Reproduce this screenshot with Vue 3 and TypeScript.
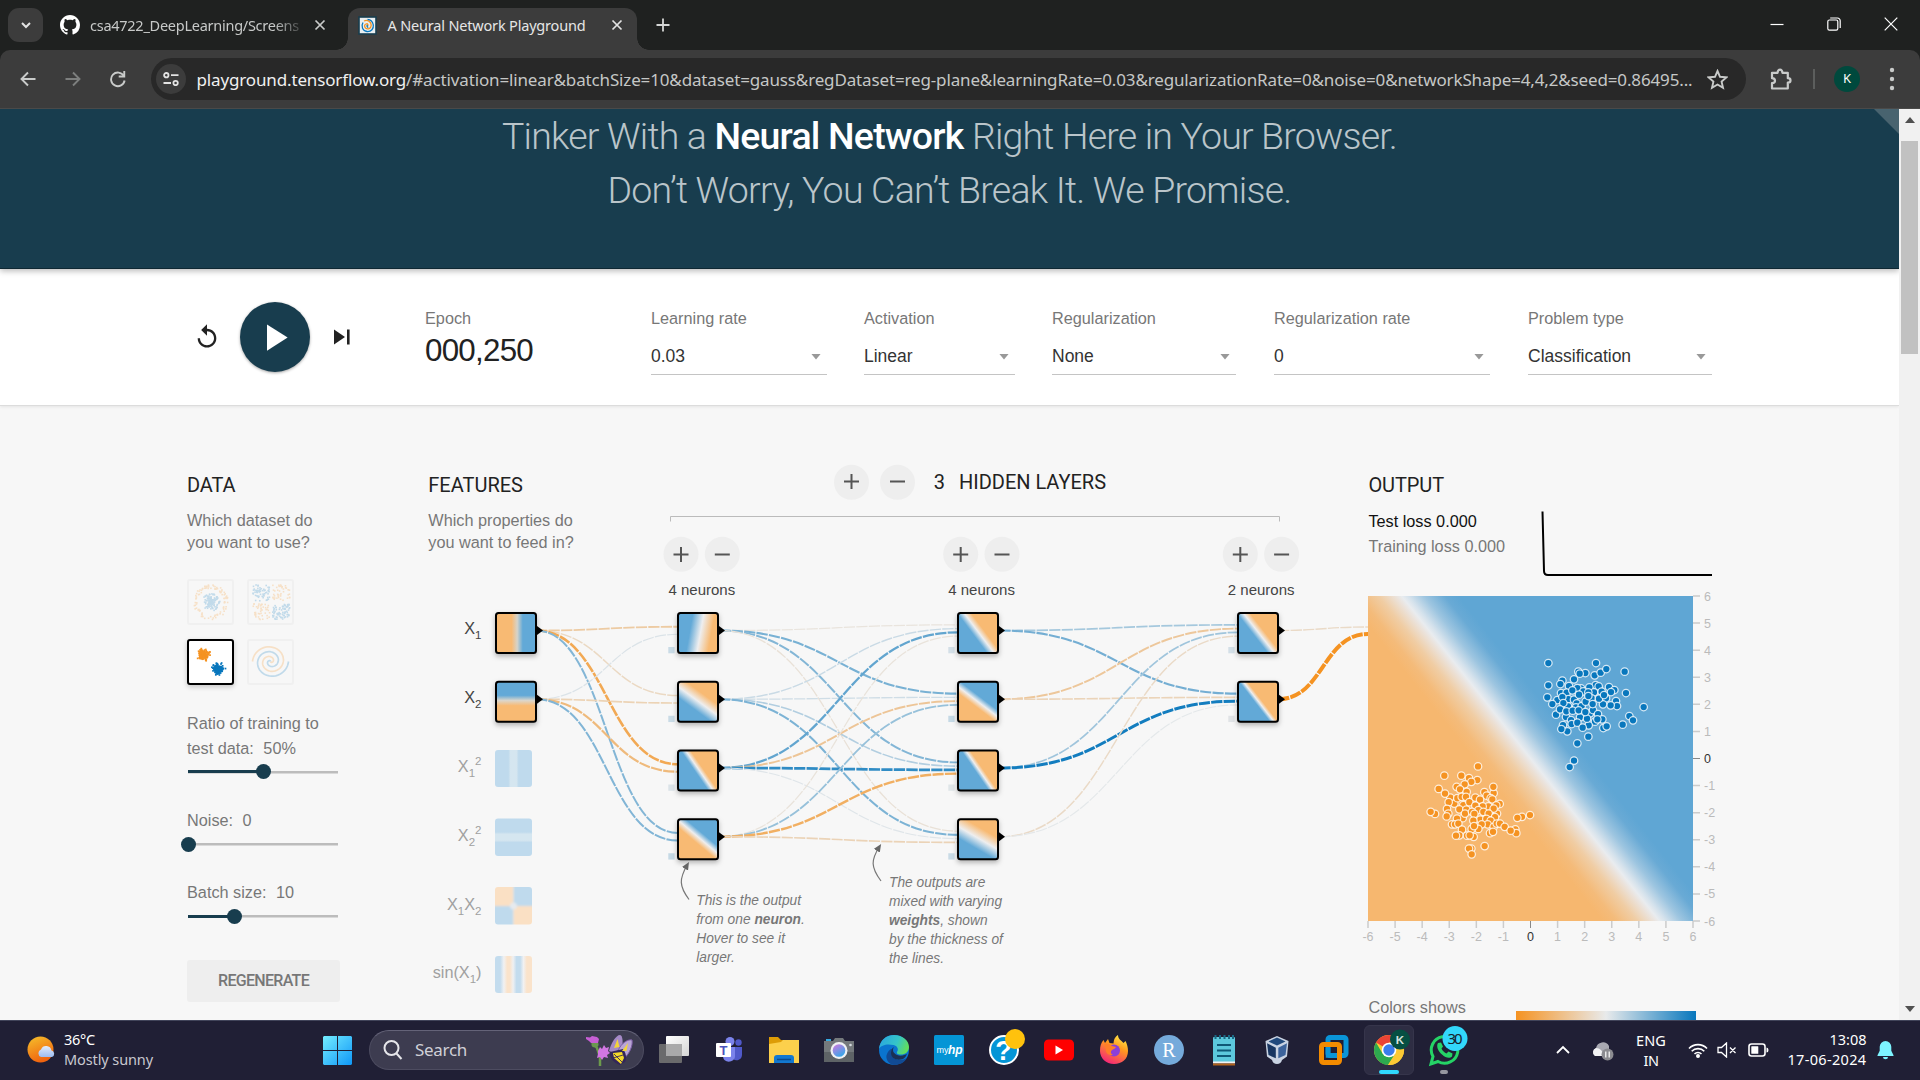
<script setup lang="ts">
import type { Directive } from 'vue'

// Tracks a single line of text so that it fills the given width.
const vFit: Directive<HTMLElement, number> = {
  mounted(el, binding) {
    const natural = el.getBoundingClientRect().width
    const count = (el.textContent ?? '').length
    if (count > 0) el.style.letterSpacing = `${(binding.value - natural) / count}px`
  },
}

const ORANGE = '#f8ba73'
const BLUE = '#62a9d7'
const PALE = '#eeeeef'

interface Control { label: string; value: string; width: number; gap: number }
const controls: Control[] = [
  { label: 'Learning rate', value: '0.03', width: 176, gap: 37 },
  { label: 'Activation', value: 'Linear', width: 151, gap: 37 },
  { label: 'Regularization', value: 'None', width: 184, gap: 38 },
  { label: 'Regularization rate', value: '0', width: 216, gap: 38 },
  { label: 'Problem type', value: 'Classification', width: 184, gap: 0 },
]

// ---- dataset thumbnails ----
interface Dot { x: number; y: number; c: string }
let seed = 7
function rnd(): number {
  seed = (seed * 16807) % 2147483647
  return seed / 2147483647
}
function gauss(): number {
  return (rnd() + rnd() + rnd() + rnd() - 2) * 0.9
}
const circleDots: Dot[] = []
for (let i = 0; i < 120; i++) {
  const a = rnd() * Math.PI * 2
  const r = rnd() * 9
  circleDots.push({ x: 23 + Math.cos(a) * r, y: 22.5 + Math.sin(a) * r, c: '#0877bd' })
}
for (let i = 0; i < 95; i++) {
  const a = rnd() * Math.PI * 2
  const r = 13.5 + rnd() * 4
  circleDots.push({ x: 23 + Math.cos(a) * r, y: 22.5 + Math.sin(a) * r, c: '#f59322' })
}
const xorDots: Dot[] = []
for (let i = 0; i < 220; i++) {
  const sx = rnd() < 0.5 ? -1 : 1
  const sy = rnd() < 0.5 ? -1 : 1
  xorDots.push({
    x: 23.5 + sx * (1.5 + rnd() * 17),
    y: 22.5 + sy * (1.5 + rnd() * 16),
    c: sx * sy > 0 ? '#0877bd' : '#f59322',
  })
}
const gaussDots: Dot[] = []
for (let i = 0; i < 150; i++) {
  gaussDots.push({ x: 15.5 + gauss() * 4.7, y: 15 + gauss() * 4.5, c: '#f59322' })
  gaussDots.push({ x: 30.3 + gauss() * 4.7, y: 29 + gauss() * 4.5, c: '#0877bd' })
}
function spiral(phase: number): string {
  const pts: string[] = []
  for (let i = 0; i <= 80; i++) {
    const t = i / 80
    const a = 1.75 * t * 2 * Math.PI + phase
    pts.push(`${(23.5 + Math.sin(a) * t * 18).toFixed(1)},${(22.5 + Math.cos(a) * t * 17).toFixed(1)}`)
  }
  return pts.join(' ')
}
const spirals = [
  { pts: spiral(0), c: '#f59322' },
  { pts: spiral(Math.PI), c: '#0877bd' },
]

const sliders = [
  { label: 'Noise:', value: '0', pos: 0, top: 28.5 },
  { label: 'Batch size:', value: '10', pos: 46, top: 28 },
]

// ---- network ----
const rowY = (i: number) => 630.5 + 68.75 * i
interface Heat { a: [number, number]; b: [number, number]; half: number; flip: boolean; mid?: string }
interface NetNode extends Heat { id: string; x: number; row: number; bias?: string }

const nodes: NetNode[] = [
  { id: 'i0', x: 495, row: 0, a: [0.53, 0], b: [0.53, 1], half: 0.14, flip: true, mid: '#d6d3c9' },
  { id: 'i1', x: 495, row: 1, a: [0, 0.47], b: [1, 0.47], half: 0.13, flip: true, mid: '#dcd6cb' },
  { id: 'a0', x: 677, row: 0, a: [0.65, 0], b: [0.47, 1], half: 0.27, flip: false, bias: '#c9dbe6' },
  { id: 'a1', x: 677, row: 1, a: [0, 0.12], b: [1, 0.85], half: 0.22, flip: false, bias: '#c9dbe6' },
  { id: 'a2', x: 677, row: 2, a: [0.19, 0], b: [0.88, 1], half: 0.1, flip: false, bias: '#dbe3e8' },
  { id: 'a3', x: 677, row: 3, a: [0, 0.02], b: [1, 0.86], half: 0.14, flip: true, bias: '#c5d9e5' },
  { id: 'b0', x: 957, row: 0, a: [0.15, 0], b: [0.9, 1], half: 0.14, flip: false, bias: '#d3dfe7' },
  { id: 'b1', x: 957, row: 1, a: [0, 0.12], b: [1, 0.88], half: 0.13, flip: true, bias: '#c5d9e5' },
  { id: 'b2', x: 957, row: 2, a: [0.19, 0], b: [0.88, 1], half: 0.09, flip: false, bias: '#dfe5e8' },
  { id: 'b3', x: 957, row: 3, a: [0, 0.18], b: [1, 0.76], half: 0.25, flip: false, bias: '#c9dbe6' },
  { id: 'c0', x: 1237, row: 0, a: [0.13, 0], b: [0.91, 1], half: 0.13, flip: false, bias: '#d3dfe7' },
  { id: 'c1', x: 1237, row: 1, a: [0.13, 0], b: [0.9, 1], half: 0.08, flip: false, bias: '#e0e3e6' },
]
function axis(n: Heat) {
  const dx = n.b[0] - n.a[0]
  const dy = n.b[1] - n.a[1]
  const len = Math.hypot(dx, dy)
  const cx = (n.a[0] + n.b[0]) / 2
  const cy = (n.a[1] + n.b[1]) / 2
  const nx = (dy / len) * n.half
  const ny = (-dx / len) * n.half
  return { x1: cx - nx, y1: cy - ny, x2: cx + nx, y2: cy + ny }
}

function mix(w: number): string {
  const t = Math.min(1, Math.abs(w))
  const to = w < 0 ? [245, 147, 34] : [8, 119, 189]
  const from = [232, 234, 235]
  return `rgb(${from.map((v, i) => Math.round(v + (to[i] - v) * t)).join(',')})`
}
interface Link { d: string; c: string; w: number }
const links: Link[] = []
function connect(x0: number, x1: number, weights: number[][]) {
  const n = weights.length
  weights.forEach((row, i) =>
    row.forEach((w, j) => {
      const ty = rowY(j) + ((i - (n - 1) / 2) / n) * 15
      const mx = (x0 + x1) / 2
      links.push({
        d: `M${x0},${rowY(i)}C${mx},${rowY(i)} ${mx},${ty} ${x1},${ty}`,
        c: mix(w),
        w: (1 + (9 * Math.abs(w)) / 5) * 1.1,
      })
    }),
  )
}
connect(536, 678, [
  [-0.36, -0.2, -0.75, 0.45],
  [0.06, -0.27, -0.55, 0.46],
])
connect(719, 958, [
  [-0.07, 0.5, 0.45, -0.1],
  [0.14, 0.11, 0.24, 0.48],
  [0.6, -0.42, 0.82, 0.04],
  [-0.08, 0.36, -0.68, -0.26],
])
connect(999, 1238, [
  [0.3, 0.52],
  [-0.4, -0.25],
  [0.32, 0.95],
  [-0.18, 0.02],
])
links.push({ d: `M1278,630.5C1323,630.5 1323,627 1368,627`, c: mix(-0.18), w: 1.4 })
links.push({ d: `M1278,699.3C1323,699.3 1323,634 1368,634`, c: mix(-1), w: 4 })

const layers = [
  { x: 681, label: '4 neurons' },
  { x: 960.7, label: '4 neurons' },
  { x: 1240.3, label: '2 neurons' },
]

// ---- output scatter ----
const bluePts = [
  [145,99],[288,99],[374,125],[284,136],[302,128],[319,117],[235,125],[256,129],[239,131],[187,152],[222,148],[181,162],
  [145,166],[207,168],[243,175],[232,174],[287,165],[268,172],[296,169],[327,171],[343,180],[250,184],[282,187],
  [305,185],[333,186],[378,189],[431,231],[388,258],[399,271],[368,284],[310,294],[320,289],[318,205],[348,213],[351,228],
  [332,226],[309,223],[142,202],[172,210],[157,222],[168,254],[183,189],[200,188],[217,181],[205,207],[222,209],[230,220],
  [228,232],[187,201],[204,229],[190,219],[180,238],[198,261],[199,244],[213,270],[189,285],[202,304],[184,297],[215,282],
  [240,262],[232,278],[270,250],[285,275],[266,286],[248,293],[261,266],[218,242],[245,228],[236,241],[275,205],[257,215],
  [279,240],[278,222],[256,246],[294,252],[307,268],[292,268],[297,206],[312,195],[237,194],[265,187],[265,198],[265,320],
  [232,340],[222,392],[209,411],
].map(([x, y]) => [1500 + x / 3, 630 + y / 3])
const orangePts = [
  [414,858],[313,884],[364,884],[387,891],[412,896],[394,901],[296,921],[350,915],[374,908],[360,922],[331,945],[315,934],
  [380,929],[461,933],[460,915],[433,930],[343,962],[352,947],[365,943],[378,943],[326,958],[370,966],[388,958],[406,945],
  [440,940],[452,947],[420,951],[457,950],[479,963],[469,967],[445,970],[428,970],[406,968],[471,990],[461,976],[358,978],
  [379,979],[321,977],[325,990],[320,998],[285,991],[272,985],[368,1003],[351,1004],[336,1020],[345,1020],[355,1018],
  [375,990],[415,980],[430,985],[396,985],[403,991],[421,1007],[446,990],[465,1000],[439,1005],[400,1010],[452,1010],
  [443,1020],[425,1020],[461,1027],[470,1018],[480,1018],[494,1027],[526,1034],[529,1045],[512,1038],[546,999],[532,1002],
  [570,994],[450,1045],[459,1041],[415,1033],[395,1033],[402,1025],[366,1035],[358,1051],[348,1052],[381,1052],[401,1055],
  [389,1051],[434,1081],[394,1088],[387,1088],[395,1104],
].map(([x, y]) => [1340 + x / 3, 460 + y / 2.8])
const ticks = Array.from({ length: 13 }, (_, i) => i - 6)
const unit = 325 / 12
</script>

<template>
  <div class="screen">
    <!-- tab strip -->
    <div class="tabs">
      <div class="tab-menu">
        <svg width="12" height="12" viewBox="0 0 12 12"><path d="M2 4l4 4 4-4" fill="none" stroke="#e3e3e3" stroke-width="2" /></svg>
      </div>
      <div class="tab idle">
        <svg width="20" height="20" viewBox="0 0 16 16"><path fill="#fff" d="M8 0C3.58 0 0 3.58 0 8c0 3.54 2.29 6.53 5.47 7.59.4.07.55-.17.55-.38 0-.19-.01-.82-.01-1.49-2.01.37-2.53-.49-2.69-.94-.09-.23-.48-.94-.82-1.13-.28-.15-.68-.52-.01-.53.63-.01 1.08.58 1.23.82.72 1.21 1.87.87 2.33.66.07-.52.28-.87.51-1.07-1.78-.2-3.64-.89-3.64-3.95 0-.87.31-1.59.82-2.15-.08-.2-.36-1.02.08-2.12 0 0 .67-.21 2.2.82.64-.18 1.32-.27 2-.27s1.36.09 2 .27c1.53-1.04 2.2-.82 2.2-.82.44 1.1.16 1.92.08 2.12.51.56.82 1.27.82 2.15 0 3.07-1.87 3.75-3.65 3.95.29.25.54.73.54 1.48 0 1.07-.01 1.93-.01 2.2 0 .21.15.46.55.38A8.01 8.01 0 0 0 16 8c0-4.42-3.58-8-8-8z" /></svg>
        <span class="tab-text fade"><span v-fit="209" class="fit">csa4722_DeepLearning/Screens</span></span>
        <svg class="x" width="12" height="12" viewBox="0 0 12 12"><path d="M1.5 1.5l9 9m0-9l-9 9" stroke="#c9cbca" stroke-width="1.7" /></svg>
      </div>
      <div class="tab live">
        <svg width="19" height="19" viewBox="0 0 19 19">
          <rect x="1" y="1" width="17" height="17" fill="#e9eef0" stroke="#183d4e" stroke-width="1.6" />
          <path d="M9.5 10c1-1 .3-2.4-1-2.2C6.4 8 6 10.6 7.5 12c2.2 2 5.6.4 5.7-2.7C13.3 5.5 9.4 3.5 6 5" fill="none" stroke="#f59322" stroke-width="1.3" />
          <path d="M9.5 9c-1 1-.3 2.4.8 2.2M5 6.5C2.8 10 4.5 15 9 15.5c4.3.4 6.8-3 6.3-6.5C14.8 5.8 12.5 3.5 9.5 3.3" fill="none" stroke="#0877bd" stroke-width="1.3" />
        </svg>
        <span v-fit="198" class="tab-text fit">A Neural Network Playground</span>
        <svg class="x" width="12" height="12" viewBox="0 0 12 12"><path d="M1.5 1.5l9 9m0-9l-9 9" stroke="#e3e3e3" stroke-width="1.7" /></svg>
      </div>
      <svg class="new-tab" width="14" height="14" viewBox="0 0 14 14"><path d="M7 .5v13M.5 7h13" stroke="#d5d7d6" stroke-width="1.8" /></svg>
      <div class="win">
        <svg width="14" height="14" viewBox="0 0 14 14"><path d="M.5 7.5h13" stroke="#fff" stroke-width="1.2" /></svg>
        <svg width="14" height="14" viewBox="0 0 14 14" fill="none" stroke="#fff" stroke-width="1.2"><rect x=".8" y="3" width="10" height="10.2" rx="1.6" /><path d="M3.2 1h7.200a2.800 2.800 0 0 1 2.800 2.800V11" /></svg>
        <svg width="14" height="14" viewBox="0 0 14 14"><path d="M.7.7l12.600 12.600m0-12.600L.7 13.300" stroke="#fff" stroke-width="1.2" /></svg>
      </div>
    </div>

    <!-- toolbar -->
    <div class="toolbar-back">
      <div class="toolbar">
        <svg class="nav back" width="16" height="16" viewBox="0 0 16 16"><path d="M15.5 8H2M8 1.5L1.5 8 8 14.5" fill="none" stroke="#c9cbca" stroke-width="1.9" /></svg>
        <svg class="nav fwd" width="16" height="16" viewBox="0 0 16 16"><path d="M.5 8H14M8 1.5L14.5 8 8 14.5" fill="none" stroke="#7d7f7e" stroke-width="1.9" /></svg>
        <svg class="nav rel" width="18" height="18" viewBox="0 0 18 18"><path d="M14.8 6A6.8 6.8 0 1 0 15.6 10.5" fill="none" stroke="#c9cbca" stroke-width="1.9" /><path d="M16.2 1v6.5H9.700V5.600h4.600V1z" fill="#c9cbca" /></svg>
        <div class="omnibox">
          <div class="site-info">
            <svg width="16" height="14" viewBox="0 0 16 14" fill="none" stroke="#e3e3e3" stroke-width="1.8"><circle cx="3.3" cy="3.2" r="2.2" /><path d="M8 3.2h7.5M.5 11h7.5" /><circle cx="12.6" cy="11" r="2.2" /></svg>
          </div>
          <span v-fit="1496" class="fit url"><b>playground.tensorflow.org</b>/#activation=linear&amp;batchSize=10&amp;dataset=gauss&amp;regDataset=reg-plane&amp;learningRate=0.03&amp;regularizationRate=0&amp;noise=0&amp;networkShape=4,4,2&amp;seed=0.86495...</span>
          <svg class="star" width="21" height="21" viewBox="0 0 21 21"><path d="M10.5 2l2.500 5.800 6.300.6-4.700 4.200 1.400 6.200-5.500-3.300L5 18.800l1.400-6.200L1.700 8.400 8 7.800z" fill="none" stroke="#c9cbca" stroke-width="1.9" /></svg>
        </div>
        <svg class="puzzle" width="22" height="22" viewBox="0 0 22 22"><path d="M2 4.800h5.600c0-4.200 4.800-4.200 4.800 0h5.400v5.400c3.600 0 3.600 4.400 0 4.400V20.500H2v-5.300c4-.6 4-4.600 0-5z" fill="none" stroke="#c9cbca" stroke-width="2.2" stroke-linejoin="round" /></svg>
        <i class="divider"></i>
        <div class="avatar">K</div>
        <svg class="dots" width="6" height="24" viewBox="0 0 6 24" fill="#c9cbca"><circle cx="3" cy="3" r="2.2" /><circle cx="3" cy="12" r="2.2" /><circle cx="3" cy="21" r="2.2" /></svg>
      </div>
    </div>

    <!-- page -->
    <div class="viewport">
      <div class="page">
        <header class="banner">
          <h1><span v-fit="895" class="fit">Tinker With a <b>Neural Network</b> Right Here in Your Browser.</span></h1>
          <h1><span v-fit="684" class="fit">Don’t Worry, You Can’t Break It. We Promise.</span></h1>
          <i class="corner"></i>
        </header>

        <section class="controls">
          <svg class="reset" width="28" height="28" viewBox="0 0 24 24"><path fill="#222" d="M12 5V1L7 6l5 5V7c3.310 0 6 2.690 6 6s-2.690 6-6 6-6-2.690-6-6H4c0 4.420 3.580 8 8 8s8-3.580 8-8-3.580-8-8-8z" /></svg>
          <div class="play"><svg width="45" height="45" viewBox="0 0 24 24"><path fill="#fff" d="M8 5v14l11-7z" /></svg></div>
          <svg class="step" width="16" height="16" viewBox="0 0 16 16" fill="#222"><path d="M0 .5v15L11 8z" /><rect x="13" y=".5" width="2.6" height="15" /></svg>
          <div class="epoch"><span class="label">Epoch</span><span class="count"><span v-fit="108" class="fit">000,250</span></span></div>
          <div v-for="c in controls" :key="c.label" class="control" :style="{ width: c.width + 'px', marginRight: c.gap + 'px' }">
            <span class="label">{{ c.label }}</span>
            <div class="select"><span>{{ c.value }}</span><i></i></div>
          </div>
        </section>

        <main class="main">
          <section class="data">
            <h4>DATA</h4>
            <p>Which dataset do<br />you want to use?</p>
            <div class="sets">
              <div class="set off">
                <svg width="43" height="42" viewBox="2 2 43 42"><rect v-for="(d, i) in circleDots" :key="i" :x="d.x" :y="d.y" width="1.6" height="1.6" :fill="d.c" /></svg>
              </div>
              <div class="set off">
                <svg width="43" height="42" viewBox="2 2 43 42"><rect v-for="(d, i) in xorDots" :key="i" :x="d.x" :y="d.y" width="1.6" height="1.6" :fill="d.c" /></svg>
              </div>
              <div class="set on">
                <svg width="43" height="42" viewBox="2 2 43 42"><rect v-for="(d, i) in gaussDots" :key="i" :x="d.x" :y="d.y" width="1.7" height="1.7" :fill="d.c" /></svg>
              </div>
              <div class="set off">
                <svg width="43" height="42" viewBox="2 2 43 42"><polyline v-for="s in spirals" :key="s.c" :points="s.pts" fill="none" :stroke="s.c" stroke-width="1.7" /></svg>
              </div>
            </div>
            <div class="slider-label">Ratio of training to<br />test data:<span>50%</span></div>
            <div class="slider"><i style="width: 50%"></i><b style="left: 50%"></b></div>
            <template v-for="s in sliders" :key="s.label">
              <div class="slider-label" :style="{ marginTop: s.top + 'px' }">{{ s.label }}<span>{{ s.value }}</span></div>
              <div class="slider"><i :style="{ width: s.pos + 'px' }"></i><b :style="{ left: s.pos + 'px' }"></b></div>
            </template>
            <div class="regen"><span v-fit="91" class="fit">REGENERATE</span></div>
          </section>

          <section class="network">
            <h4>FEATURES</h4>
            <p>Which properties do<br />you want to feed in?</p>
            <svg class="graph" width="939" height="614" viewBox="429 406 939 614">
              <defs>
                <linearGradient v-for="n in nodes" :id="'g-' + n.id" :key="n.id" v-bind="axis(n)">
                  <stop offset="0" :stop-color="n.flip ? ORANGE : BLUE" />
                  <stop offset="0.5" :stop-color="n.mid ?? PALE" />
                  <stop offset="1" :stop-color="n.flip ? BLUE : ORANGE" />
                </linearGradient>
                <linearGradient id="sq1">
                  <stop offset=".36" stop-color="#bfdaed" /><stop offset=".42" stop-color="#d5e6f0" /><stop offset=".58" stop-color="#d5e6f0" /><stop offset=".64" stop-color="#bfdaed" />
                </linearGradient>
                <linearGradient id="sq2" x1="0" x2="0" y1="0" y2="1">
                  <stop offset=".36" stop-color="#bfdaed" /><stop offset=".42" stop-color="#d5e6f0" /><stop offset=".58" stop-color="#d5e6f0" /><stop offset=".64" stop-color="#bfdaed" />
                </linearGradient>
                <linearGradient id="sin">
                  <stop offset=".14" stop-color="#c3dcee" /><stop offset=".24" stop-color="#f1f1f2" /><stop offset=".33" stop-color="#fae3cb" /><stop offset=".4" stop-color="#fae3cb" /><stop offset=".49" stop-color="#eff0f2" />
                  <stop offset=".58" stop-color="#c3dcee" /><stop offset=".68" stop-color="#c3dcee" /><stop offset=".77" stop-color="#f1f1f2" /><stop offset=".86" stop-color="#fae3cb" />
                </linearGradient>
                <clipPath id="cross"><rect x="495" y="887" width="37" height="37.5" rx="3" /></clipPath>
                <filter id="drop" x="-30%" y="-30%" width="160%" height="170%"><feDropShadow dx="0" dy="2.5" stdDeviation="2.5" flood-opacity=".28" /></filter>
                <filter id="soft"><feGaussianBlur stdDeviation="1" /></filter>
                <marker id="head" markerWidth="9" markerHeight="8" refX="5" refY="3.5" orient="auto" markerUnits="userSpaceOnUse"><path d="M0 0l8 3.5L0 7z" fill="#666" /></marker>
              </defs>

              <g fill="none" stroke-dasharray="11.25 1.25">
                <path v-for="(l, i) in links" :key="i" :d="l.d" :stroke="l.c" :stroke-width="l.w" />
              </g>

              <g v-for="n in nodes" :key="n.id">
                <rect v-if="n.bias" :x="n.x - 8.7" :y="rowY(n.row) + 16.5" width="6.3" height="6.3" :fill="n.bias" />
                <path :d="`M${n.x + 40},${rowY(n.row) - 6}l8,6l-8,6z`" fill="#000" />
                <rect :x="n.x + 1" :y="rowY(n.row) - 17.5" width="40" height="40" rx="2.5" :fill="`url(#g-${n.id})`" stroke="#000" stroke-width="2" filter="url(#drop)" />
              </g>

              <rect x="495" y="750" width="37" height="37" rx="3" fill="url(#sq1)" />
              <rect x="495" y="818.5" width="37" height="37.5" rx="3" fill="url(#sq2)" />
              <g clip-path="url(#cross)">
                <g filter="url(#soft)">
                  <rect x="490" y="880" width="23.5" height="26" fill="#fae0c4" /><rect x="513.5" y="880" width="24" height="26" fill="#bfdaed" />
                  <rect x="490" y="906" width="23.5" height="24" fill="#bfdaed" /><rect x="513.5" y="906" width="24" height="24" fill="#fae0c4" />
                  <circle cx="513.5" cy="906" r="3.5" fill="#e6eaee" />
                </g>
              </g>
              <rect x="495" y="956" width="37" height="37" rx="3" fill="url(#sin)" />

              <g class="feat" text-anchor="end">
                <text x="481.5" y="634">X<tspan class="s" dy="5">1</tspan></text>
                <text x="481.5" y="702.5">X<tspan class="s" dy="5">2</tspan></text>
                <g fill="#a0a0a0">
                  <text x="481.5" y="771.5">X<tspan class="s" dy="5">1</tspan><tspan class="s" dy="-11.5">2</tspan></text>
                  <text x="481.5" y="840.5">X<tspan class="s" dy="5">2</tspan><tspan class="s" dy="-11.5">2</tspan></text>
                  <text x="481.5" y="909.5">X<tspan class="s" dy="5">1</tspan><tspan dy="-5">X</tspan><tspan class="s" dy="5">2</tspan></text>
                  <text x="481.5" y="978">sin(X<tspan class="s" dy="5">1</tspan><tspan dy="-5">)</tspan></text>
                </g>
              </g>

              <g fill="none" stroke="#555" stroke-width="2">
                <circle cx="851.5" cy="482.3" r="17.5" fill="#eee" stroke="none" /><path d="M844 481.5h15M851.5 474v15" />
                <circle cx="897.5" cy="482.3" r="17.5" fill="#eee" stroke="none" /><path d="M890 481.5h15" />
                <g v-for="l in layers" :key="l.x">
                  <circle :cx="l.x" cy="554.3" r="17.5" fill="#eee" stroke="none" /><path :d="`M${l.x - 7.5} 554.5h15M${l.x} 547v15`" />
                  <circle :cx="l.x + 41.3" cy="554.3" r="17.5" fill="#eee" stroke="none" /><path :d="`M${l.x + 33.8} 554.5h15`" />
                </g>
              </g>
              <g class="roboto">
                <text x="933.8" y="489">3</text>
                <text x="959" y="489" textLength="147">HIDDEN LAYERS</text>
              </g>
              <g class="count-label"><text v-for="l in layers" :key="l.x" :x="l.x - 12.5" y="595">{{ l.label }}</text></g>
              <path d="M670.5 521.5v-5h609v5" fill="none" stroke="#bbb" />

              <g fill="none" stroke="#777" stroke-width="1.2" marker-end="url(#head)">
                <path d="M689 899.5C679 886 679 879 687.5 864.5" />
                <path d="M881 881C870.5 867 871 860 879.5 846.5" />
              </g>
              <g class="note">
                <text><tspan x="696.3" y="904.5">This is the output</tspan><tspan x="696.3" y="923.5">from one <tspan class="strong">neuron</tspan>.</tspan><tspan x="696.3" y="942.5">Hover to see it</tspan><tspan x="696.3" y="961.7">larger.</tspan></text>
                <text><tspan x="889" y="887">The outputs are</tspan><tspan x="889" y="906.2">mixed with varying</tspan><tspan x="889" y="925"><tspan class="strong">weights</tspan>, shown</tspan><tspan x="889" y="944.2">by the thickness of</tspan><tspan x="889" y="963">the lines.</tspan></text>
              </g>
            </svg>
          </section>

          <section class="output">
            <h4>OUTPUT</h4>
            <div class="metrics">
              <div class="loss"><span class="dark">Test loss 0.000</span><span>Training loss 0.000</span></div>
              <svg width="172" height="68" viewBox="1541 510 172 68"><path d="M1542.5 511.5L1544 571Q1544 575 1548 575H1712" fill="none" stroke="#000" stroke-width="2" /></svg>
            </div>
            <svg class="heat" width="362" height="364" viewBox="1358 584 362 364">
              <defs>
                <linearGradient id="field" gradientUnits="userSpaceOnUse" x1="1495.7" y1="786.1" x2="1565.3" y2="730.9">
                  <stop offset="0" stop-color="#f6b76f" /><stop offset=".12" stop-color="#f4bb7a" /><stop offset=".3" stop-color="#f0cda4" /><stop offset=".45" stop-color="#ebe3dc" />
                  <stop offset=".5" stop-color="#e9ecef" /><stop offset=".56" stop-color="#d5e2ec" /><stop offset=".7" stop-color="#9dc5e0" /><stop offset=".88" stop-color="#69aad5" /><stop offset="1" stop-color="#5fa6d4" />
                </linearGradient>
              </defs>
              <rect x="1368" y="596" width="325" height="325" fill="url(#field)" />
              <g stroke="#fff" stroke-opacity=".8" stroke-width="1.25">
                <circle v-for="(p, i) in orangePts" :key="'o' + i" :cx="p[0]" :cy="p[1]" r="3.75" fill="#f59322" />
                <circle v-for="(p, i) in bluePts" :key="'b' + i" :cx="p[0]" :cy="p[1]" r="3.75" fill="#0877bd" />
              </g>
              <g v-for="t in ticks" :key="t" :class="['tick', { zero: t === 0 }]">
                <path :d="`M${1530.5 + t * unit} 921v7M1693 ${758.5 - t * unit}h7`" />
                <text :x="1530.5 + t * unit" y="941" text-anchor="middle">{{ t }}</text>
                <text x="1704" :y="763 - t * unit">{{ t }}</text>
              </g>
            </svg>
            <div class="legend"><span>Colors shows</span><i></i></div>
          </section>
        </main>
      </div>
      <div class="scroll">
        <svg width="10" height="6" viewBox="0 0 10 6"><path d="M0 6l5-6 5 6z" fill="#505050" /></svg>
        <i></i>
        <svg class="down" width="10" height="6" viewBox="0 0 10 6"><path d="M0 0l5 6 5-6z" fill="#505050" /></svg>
      </div>
    </div>

    <!-- taskbar -->
    <footer class="taskbar">
      <svg class="weather" width="30" height="28" viewBox="0 0 30 28">
        <defs>
          <linearGradient id="sun" x1="0" y1="0" x2=".4" y2="1"><stop offset="0" stop-color="#f5c12c" /><stop offset="1" stop-color="#f0640f" /></linearGradient>
          <linearGradient id="cl" x1="0" y1="0" x2="0" y2="1"><stop offset="0" stop-color="#e3ecfb" /><stop offset="1" stop-color="#9dbcf0" /></linearGradient>
        </defs>
        <circle cx="13.5" cy="13.5" r="13" fill="url(#sun)" /><path d="M14 21a4 4 0 0 1 0-7.5 5.5 5.5 0 0 1 10.5 1A3.400 3.400 0 0 1 25 21z" fill="url(#cl)" />
      </svg>
      <div class="forecast"><span v-fit="31" class="fit white">36°C</span><span v-fit="89" class="fit">Mostly sunny</span></div>
      <svg class="start" width="29" height="29" viewBox="0 0 29 29">
        <defs><linearGradient id="win" gradientUnits="userSpaceOnUse" x1="0" y1="0" x2="29" y2="29"><stop offset="0" stop-color="#74edff" /><stop offset="1" stop-color="#0f97f7" /></linearGradient></defs>
        <path fill="url(#win)" d="M1 0h13v14H0V1zM15 0h13l1 1v13H15zM0 15h14v14H1l-1-1zM15 15h14v13l-1 1H15z" />
      </svg>
      <div class="search">
        <svg width="20" height="20" viewBox="0 0 20 20" fill="none" stroke="#e6e6ea" stroke-width="2"><circle cx="8.5" cy="8" r="7" /><path d="M13.5 13.5L18.5 19" /></svg>
        <span v-fit="52" class="fit">Search</span>
        <svg class="fly" width="48" height="32" viewBox="0 0 48 32">
          <path d="M7 8l5 6 3 9v9" stroke="#6c9a4c" stroke-width="2.5" fill="none" /><ellipse cx="10" cy="10.5" rx="3.5" ry="3" fill="#6b9850" />
          <path d="M1 3l4 .5 2-1.5 5 1 2 2-1 4H6L4 7 1 5z" fill="#c75fd5" />
          <path d="M24 17C26 9 31 1 35 1c3 1 3 7 2 13l-8 5z" fill="#a58ac6" /><path d="M33 17c3-8 10-12 14-11 1 5-2 14-9 19z" fill="#b9a5d4" stroke="#7c5ca6" />
          <path d="M25 18l13-3c3 4 4 9 2 13l-5 3c-6-2-11-7-10-13z" fill="#33265a" /><path d="M28 19l9-1 2 6-3 6-7-6z" fill="#f5d928" /><path d="M29 20l8 8M28 24l10-3" stroke="#33265a" stroke-width=".9" />
          <path d="M29 14l3.500-9 2 8zM37 17l6-8-1.500 8z" fill="#f3d43a" />
          <path d="M13 17l2-4 2 2 2-4 2 3 3-1-1 4 2 2-3 2 1 3-4-1-2 3-2-3-3 1 1-4z" fill="#d277e3" />
        </svg>
      </div>

      <div class="apps">
        <svg viewBox="0 0 32 32"><defs><linearGradient id="tv" x1="0" y1="0" x2="1" y2="1"><stop offset="0" stop-color="#fff" /><stop offset="1" stop-color="#d5d5d5" /></linearGradient></defs><rect x="8" y="2" width="23" height="20" rx="1" fill="url(#tv)" /><rect x="1" y="10" width="23" height="19" rx="1" fill="#6a6a6c" /><path d="M8 10h16v12H8z" fill="#a9a9aa" /></svg>
        <svg viewBox="0 0 32 32"><circle cx="17" cy="7.5" r="4.5" fill="#7b83eb" /><circle cx="25.5" cy="8.5" r="3.2" fill="#5059c9" /><path d="M19 13h10v8a5.5 5.5 0 0 1-9 4z" fill="#5059c9" /><path d="M10 13h12v9c0 7-12 8-12 0z" fill="#7b83eb" /><rect x="3" y="9" width="15" height="14" rx="1" fill="#fff" /><text x="10.5" y="20.5" class="teams" text-anchor="middle">T</text></svg>
        <svg viewBox="0 0 32 32"><path d="M1 3h9l3 3h11v5H1z" fill="#dd9c06" /><path d="M1 10l12-2 2-2h16v23H1z" fill="#fcd04c" /><path d="M6 29v-5q0-3 3-3h14q3 0 3 3v5z" fill="#1378d0" /><path d="M9 25.5h14" stroke="#0a4b8f" stroke-width="1.5" /></svg>
        <svg viewBox="0 0 32 32"><defs><linearGradient id="lens" x1=".2" y1="0" x2=".8" y2="1"><stop offset="0" stop-color="#c77be0" /><stop offset="1" stop-color="#2aa9e8" /></linearGradient></defs><path d="M10 7l2-3h8l2 3h9v21H1V7z" fill="#74797c" /><path d="M1 18h30v10H1z" fill="#5e6366" /><rect x="3" y="5" width="5" height="2" fill="#35a9e0" /><circle cx="16" cy="16.5" r="8.5" fill="#eff1f3" /><circle cx="16" cy="16.5" r="6.3" fill="url(#lens)" /><circle cx="27.5" cy="11" r="1.3" fill="#d5dade" /></svg>
        <svg viewBox="0 0 32 32"><defs><linearGradient id="ed" x1="0" y1=".2" x2="1" y2=".5"><stop offset="0" stop-color="#2aa5e0" /><stop offset=".6" stop-color="#35c5c8" /><stop offset="1" stop-color="#62df5b" /></linearGradient></defs><circle cx="16" cy="16" r="15" fill="#0a74cf" /><path d="M1 15C2 6 8 1 16 1c9 0 15 6 15 12 0 5-4 7.5-8 7.5-4 0-5-1.5-3.5-3.5 1-2 0-5-4-6C9 9.5 3 11 1 15z" fill="url(#ed)" /><path d="M14 15c-3 5 1 11 8 11 3 0 5-1 7-2-3 5-8 7-13 7-6-1-9-7-7-11 1-3 3-5 5-5z" fill="#114a94" /><path d="M16 13c-2 3-1 6 3 8 4 1.5 8 0 10-1-1 2-2 4-4 5-7 2-12-1-12-6 0-3 1-5 3-6z" fill="#1f1f35" opacity=".8" /></svg>
        <svg viewBox="0 0 32 32"><rect x="1" y="1" width="30" height="30" rx="1.5" fill="#0495d6" /><text x="3.5" y="19" class="my">my</text><text x="15" y="20" class="hp">hp</text></svg>
        <svg viewBox="0 0 32 32" overflow="visible"><circle cx="16" cy="16" r="14" fill="#0495d6" stroke="#fff" stroke-width="2" /><text x="15.5" y="25.5" class="q" text-anchor="middle">?</text><circle cx="27" cy="5" r="10" fill="#ffc20d" /></svg>
        <svg viewBox="0 0 32 32"><rect x="1" y="5.5" width="30" height="21" rx="4.5" fill="#f00" /><path d="M12.5 11.5v9l7.5-4.5z" fill="#fff" /></svg>
        <svg viewBox="0 0 32 32"><defs><linearGradient id="ff" x1=".8" y1="0" x2=".3" y2="1"><stop offset="0" stop-color="#fff04a" /><stop offset=".4" stop-color="#ff9a1e" /><stop offset="1" stop-color="#f5237a" /></linearGradient></defs><path d="M16 30C8 30 2 24 2 17c0-5 1-8 3.5-11l1.500 3 3-4 1.500 4 4 .5C16 5 17 3 20 1c0 4 3 5 5.500 8l2-2C29 10 30 13 30 17c0 8-6 13-14 13z" fill="url(#ff)" /><circle cx="16" cy="16.5" r="6" fill="#8b3fd8" /><path d="M6 10c3-1 6 0 8 2l4 1c-1 2-3 2-4 3-2 2-1 4 1 5-5 1-8-3-7-6z" fill="#ff7e28" /></svg>
        <svg viewBox="0 0 32 32"><circle cx="16" cy="16" r="15" fill="#75aadb" /><text x="16" y="22.5" class="rr" text-anchor="middle">R</text></svg>
        <svg viewBox="0 0 32 32"><rect x="5" y="3" width="22" height="26" rx="1" fill="#5cc8dc" /><rect x="5" y="27.5" width="22" height="2" fill="#f2f2f2" /><rect x="5" y="29.5" width="22" height="2" fill="#b0621c" /><path d="M7.5 1v4M12 1v4M16.5 1v4M21 1v4M25 1v4" stroke="#1a6a85" stroke-width="2" /><path d="M9 11h14M9 16.5h14M9 22h14" stroke="#0f5876" stroke-width="1.8" /></svg>
        <svg viewBox="0 0 32 32"><path d="M14 2l11.500 5L24 22.500l-5 3.500q-1 4-5 4t-5-4l-5-3.500L2.500 7z" fill="#c9d3e2" /><path d="M14 3.5L22.500 7.500 14 11.500 5.500 7.500z" fill="#20497c" /><path d="M4 9.300l8.800 4.400v10.500L5.500 21z" fill="#183661" /><path d="M24 9.300l-8.700 4.400v10.500l7.200-3.200z" fill="#3c639b" /></svg>
        <svg viewBox="0 0 32 32" fill="none"><rect x="10" y="3.5" width="18" height="18" rx="2" stroke="#0a95d8" stroke-width="5" /><rect x="3.5" y="10.5" width="18" height="18" rx="2" stroke="#f38b00" stroke-width="5" /><path d="M10 14v7.500h6" stroke="#0a95d8" stroke-width="4.5" /></svg>
        <div class="active-app">
          <svg viewBox="0 0 32 32" overflow="visible"><circle cx="16" cy="16" r="15" fill="#fcc934" /><path d="M16 16L3 8.500A15 15 0 0 1 29 8.500H16z" fill="#ea4335" /><path d="M3 8.500A15 15 0 0 0 15 31l7.500-12L16 16l-6.500 3.500z" fill="#2da94f" /><path d="M16 8.500h13A15 15 0 0 1 15 31l7.500-11z" fill="#fcc934" /><circle cx="16" cy="16" r="7.3" fill="#fff" /><circle cx="16" cy="16" r="5.7" fill="#3b7ded" /><circle cx="27" cy="5.5" r="10" fill="#064f43" /><text x="27" y="9.7" class="k" text-anchor="middle">K</text></svg>
          <i></i>
        </div>
        <div class="wa">
          <svg viewBox="0 0 32 32" overflow="visible"><path d="M3 30l2-7.500a13.300 13.300 0 1 1 5 5z" fill="none" stroke="#25d366" stroke-width="3" /><path d="M10 9l3-.5 2 4-1.500 2c1 2.500 3 4 5 5l2-2 4 2-.5 3c-2 2-6 2-10-2-4-3.500-6-8-4-11.500z" fill="#25d366" /><circle cx="27" cy="4.5" r="12.5" fill="#32d8fb" /><text x="27" y="10" class="thirty" text-anchor="middle" textLength="15">30</text></svg>
          <i></i>
        </div>
      </div>

      <div class="tray">
        <svg class="chev" width="14" height="9" viewBox="0 0 14 9"><path d="M1 8l6-6 6 6" fill="none" stroke="#fff" stroke-width="1.8" /></svg>
        <svg class="cloud" width="22" height="22" viewBox="0 0 22 22"><path d="M3 17a4.5 4.5 0 0 1 1-8 7 7 0 0 1 13-2v10z" fill="#a9a9b2" /><path d="M3 17a4.5 4.5 0 0 1 1-8q6 0 8 8z" fill="#f2f2f4" /><circle cx="15.5" cy="15.5" r="6" fill="#8b8b90" /><path d="M13.8 12.5v6M17.2 12.5v6" stroke="#fff" stroke-width="1.2" /></svg>
        <div class="lang"><span v-fit="30" class="fit">ENG</span><span v-fit="15" class="fit">IN</span></div>
        <svg class="wifi" width="20" height="16" viewBox="0 0 20 16" fill="none" stroke="#fff" stroke-width="1.6"><path d="M1 6.500a12.500 12.500 0 0 1 18 0M3.700 9.300a8.700 8.700 0 0 1 12.600 0M6.500 12a5 5 0 0 1 7 0" /><circle cx="10" cy="14" r="1.2" fill="#fff" /></svg>
        <svg class="vol" width="20" height="16" viewBox="0 0 20 16" fill="none" stroke="#fff" stroke-width="1.3"><path d="M1 5.500h3.500L9.500 1v14l-5-4.500H1zM13 5.500l5.500 5.500m0-5.500L13 11" /></svg>
        <svg class="bat" width="21" height="14" viewBox="0 0 21 14"><rect x="1" y="1" width="16" height="12" rx="2.5" fill="none" stroke="#fff" stroke-width="1.6" /><rect x="3.3" y="3.3" width="7" height="7.4" rx=".5" fill="#fff" /><path d="M18.5 4.500q2 0 2 2.500t-2 2.500z" fill="#fff" /></svg>
        <div class="clock"><span v-fit="37" class="fit">13:08</span><span v-fit="79" class="fit">17-06-2024</span></div>
        <svg class="bell" width="17" height="20" viewBox="0 0 17 20" fill="#7df4ff"><path d="M8.500 1a5.800 5.800 0 0 1 5.800 5.800v4l2.200 4.400v.8H.5v-.8l2.200-4.400v-4A5.800 5.800 0 0 1 8.500 1zM6 17h5a2.500 2.300 0 0 1-5 0z" /></svg>
      </div>
    </footer>
  </div>
</template>

<style>
body { background: #f7f7f7; overflow: hidden; }
</style>

<style scoped>
.screen { width: 1920px; height: 1080px; display: flex; flex-direction: column; overflow: hidden; font-family: "Noto Sans", "Open Sans", sans-serif; }
.screen * { box-sizing: border-box; }
svg { flex: none; display: block; }
.fit { display: inline-block; white-space: pre; flex: none; }

.tabs { height: 50px; flex: none; background: #1f2120; display: flex; align-items: flex-start; padding-left: 8px; }
.tab-menu { width: 35px; height: 34px; margin-top: 8px; border-radius: 11px; background: #3c3c3c; display: flex; align-items: center; justify-content: center; }
.tab { display: flex; align-items: center; height: 42px; margin-top: 8px; padding-bottom: 8px; font-size: 14.5px; }
.idle { width: 305px; padding-left: 17px; color: #c7c9c8; }
.tab-text { line-height: 24px; }
.idle .tab-text { margin-left: 10px; width: 209px; overflow: hidden; }
.fade { -webkit-mask: linear-gradient(90deg, #000 88%, transparent 104%); mask: linear-gradient(90deg, #000 88%, transparent 104%); }
.idle .x { margin-left: 15px; }
.live { position: relative; width: 289px; background: #3c3c3c; border-radius: 12px 12px 0 0; padding-left: 10px; color: #e6e6e6; }
.live::before, .live::after { content: ''; position: absolute; bottom: 0; width: 12px; height: 12px; }
.live::before { left: -12px; background: radial-gradient(circle at 0 0, transparent 11.5px, #3c3c3c 12px); }
.live::after { right: -12px; background: radial-gradient(circle at 100% 0, transparent 11.5px, #3c3c3c 12px); }
.live .tab-text { margin-left: 10.5px; }
.live .x { margin-left: 25.5px; }
.new-tab { margin: 18px 0 0 19px; }
.win { margin: 17px 22px 0 auto; display: flex; gap: 43px; }

.toolbar-back { height: 59px; flex: none; background: #1f2120; }
.toolbar { height: 59px; background: #3c3c3c; border-radius: 10px 10px 0 0; border-bottom: 1px solid #4a4a49; display: flex; align-items: center; padding-left: 20px; }
.fwd { margin-left: 28.5px; }
.rel { margin-left: 28px; }
.omnibox { width: 1595px; height: 42px; margin-left: 24.5px; border-radius: 21px; background: #282828; display: flex; align-items: center; padding-left: 5px; color: #c5c7c6; font-size: 17px; }
.site-info { width: 30px; height: 30px; border-radius: 50%; background: #3c3c3c; display: flex; align-items: center; justify-content: center; margin-right: 10.5px; }
.url b { font-weight: 400; color: #f0f0f0; }
.star { margin-left: 14px; }
.puzzle { margin-left: 24px; }
.divider { width: 2px; height: 20px; background: #5c5e5d; margin-left: 21px; }
.avatar { width: 26px; height: 26px; border-radius: 50%; background: #00493d; color: #fff; font-size: 13px; line-height: 25px; text-align: center; margin-left: 19px; }
.dots { margin-left: 29px; }

.viewport { height: 911px; flex: none; display: flex; }
.page { width: 1899px; background: #f7f7f7; font-family: "Liberation Sans", Arial, sans-serif; overflow: hidden; }
.banner { position: relative; z-index: 1; height: 160px; background: #183d4e; border-bottom: 1px solid #0e2833; box-shadow: 0 2px 6px rgba(0, 0, 0, .28); text-align: center; }
h1 { margin: 0; font: 300 37.5px/54.2px Roboto, sans-serif; color: #bac5ca; }
h1 b { font-weight: 500; color: #fff; }
.corner { position: absolute; right: 0; top: 0; width: 25px; height: 25px; background: #48636f; clip-path: polygon(0 0, 100% 0, 100% 100%); }

.controls { height: 137px; background: #fff; border-bottom: 1px solid #dcdcdc; box-shadow: 0 1px 3px rgba(0, 0, 0, .08); display: flex; align-items: flex-start; padding-left: 193px; }
.reset { margin-top: 54px; }
.play { width: 70px; height: 70px; margin: 33px 0 0 19px; border-radius: 50%; background: #183d4e; box-shadow: 0 1px 3px rgba(0, 0, 0, .35); display: flex; align-items: center; justify-content: center; padding-right: 2px; }
.step { margin: 60px 0 0 24px; }
.epoch { width: 226px; margin-left: 75px; display: flex; flex-direction: column; }
.label { margin-top: 39px; font-size: 16.25px; line-height: 20px; color: #777; }
.epoch .count { font-size: 31.3px; line-height: 34px; margin-top: 6px; color: #222; }
.control { display: flex; flex-direction: column; }
.select { height: 32px; margin-top: 15px; border-bottom: 1px solid #c4c4c4; display: flex; justify-content: space-between; align-items: center; font-size: 17.5px; line-height: 26px; color: #333; padding: 0 6px 6px 0; }
.select i { width: 10px; height: 6px; background: #999; clip-path: polygon(0 0, 100% 0, 50% 100%); margin-top: 2px; }

.main { height: 614px; display: flex; padding: 67px 0 0 187px; }
h4 { margin: 0; font: 400 20px/25px Roboto, sans-serif; color: #222; }
.main p { margin: 10.5px 0 0; font-size: 16.25px; line-height: 22px; color: #777; }
.data { width: 242px; }
.data h4, .output h4 { letter-spacing: -.1px; }
.network h4, .network p { margin-left: -.7px; }
.sets { display: grid; grid-template-columns: 47px 47px; gap: 14px 13px; margin-top: 26px; }
.set { height: 46px; border-radius: 3px; border: 2px solid #f0f0f0; overflow: hidden; }
.set.off svg { opacity: .22; }
.set.on { border-color: #000; background: #fff; box-shadow: 0 2px 5px rgba(0, 0, 0, .2); }
.slider-label { margin-top: 26px; font-size: 16.25px; line-height: 25px; color: #777; }
.slider-label span { margin-left: 9.5px; }
.slider { position: relative; height: 16px; width: 150px; margin: 3px 0 0 1px; background: linear-gradient(#bcbcbc, #bcbcbc) 0 7px / 100% 2.5px no-repeat; }
.slider i { position: absolute; left: 0; top: 6.5px; height: 3px; background: #183d4e; }
.slider b { position: absolute; top: .5px; width: 15px; height: 15px; margin-left: -7.5px; border-radius: 50%; background: #183d4e; }
.regen { width: 153px; height: 42px; margin-top: 35.5px; border-radius: 3px; background: #eee; text-align: center; font: 500 16px/42px Roboto, sans-serif; color: #777; }

.network { width: 939px; position: relative; }
.graph { position: absolute; left: 0; top: -67px; }
.feat { font-size: 16.25px; fill: #444; }
.feat .s { font-size: 11.5px; }
.roboto { font: 400 20px Roboto, sans-serif; fill: #222; }
.count-label { font-size: 15px; fill: #444; }
.note { font-size: 13.75px; font-style: italic; fill: #777; }
.strong { font-weight: 700; }

.output { width: 400px; }
.output h4, .loss, .legend span { text-indent: .4px; }
.metrics { display: flex; height: 98px; }
.loss { width: 173px; padding-top: 10.5px; display: flex; flex-direction: column; font-size: 16.25px; line-height: 25px; color: #777; white-space: nowrap; }
.loss .dark { color: #111; }
.metrics svg { margin-top: 12px; }
.heat { margin: -12px 0 0 -10px; font-size: 12.5px; }
.tick path { stroke: #ccc; stroke-width: 1.5; }
.tick text { fill: #bbb; }
.zero path { stroke: #888; stroke-width: 1; }
.zero text { fill: #333; }
.legend { margin-top: 47px; display: flex; font-size: 16.25px; line-height: 24px; color: #777; }
.legend span { width: 148px; }
.legend i { width: 180px; height: 10px; margin-top: 16px; background: linear-gradient(90deg, #f59322, #e8eaeb, #0877bd); }

.scroll { width: 21px; background: #f1f1f1; display: flex; flex-direction: column; align-items: center; padding-top: 8px; }
.scroll i { width: 17px; height: 213px; margin-top: 18px; background: #c1c1c1; }
.scroll .down { margin: auto 0 8px; }

.taskbar { height: 60px; flex: none; background: #201f35; border-top: 1px solid #41445a; display: flex; align-items: flex-start; color: #c8c8d0; font-size: 14.5px; line-height: 20px; }
.weather { margin: 15px 0 0 27px; }
.forecast { width: 259px; margin-left: 7px; padding-top: 8px; display: flex; flex-direction: column; align-items: flex-start; }
.white { color: #fff; }
.start { margin-top: 15px; }
.search { width: 275px; height: 40px; margin: 9px 0 0 17px; border-radius: 20px; background: #3d3c50; border: 1px solid #4d4c60; border-top-color: #646378; display: flex; align-items: center; padding-left: 13px; font-size: 17px; color: #d0d0d7; }
.search .fit { margin-left: 12px; }
.fly { margin-left: 118px; }
.apps { display: flex; align-items: flex-start; flex: none; gap: 23px; margin: 13px 0 0 14px; width: 810px; }
.apps svg { width: 32px; height: 32px; }
.apps text { font-family: "Liberation Sans", Arial, sans-serif; }
.apps .teams { font-weight: 700; font-size: 13px; fill: #4b53bc; }
.apps .my { font-size: 9px; fill: #fff; }
.apps .hp { font-size: 12px; font-weight: 700; font-style: italic; fill: #fff; }
.apps .q { font-size: 27px; font-weight: 700; fill: #fff; }
.apps .rr { font-family: "Liberation Serif", serif; font-size: 20px; fill: #fff; }
.apps .k { font-size: 11.5px; font-weight: 700; fill: #d5e2df; }
.apps .thirty { font-size: 15px; fill: #16222b; font-family: "Noto Sans", sans-serif; }
.active-app { width: 50px; height: 50px; margin: -9px -9px 0; border-radius: 6px; background: #2e2d43; border: 1px solid #36354b; padding: 8px; position: relative; }
.active-app i { position: absolute; left: 14px; bottom: 0; width: 20px; height: 4px; border-radius: 2px; background: #30d9ff; }
.wa { position: relative; }
.wa i { position: absolute; left: 12px; top: 36px; width: 8px; height: 4px; border-radius: 2px; background: #96969f; }
.tray { display: flex; align-items: flex-start; flex: none; color: #fff; }
.chev { margin: 24px 0 0 88px; }
.cloud { margin: 18px 0 0 21.5px; }
.lang { width: 30px; margin-left: 22.5px; padding-top: 9px; display: flex; flex-direction: column; align-items: center; }
.wifi { margin: 21px 0 0 21.5px; }
.vol { margin: 21px 0 0 9.5px; }
.bat { margin: 22px 0 0 11px; }
.clock { width: 97.5px; padding-top: 8px; display: flex; flex-direction: column; align-items: flex-end; }
.bell { margin: 19px 0 0 10px; }
</style>
